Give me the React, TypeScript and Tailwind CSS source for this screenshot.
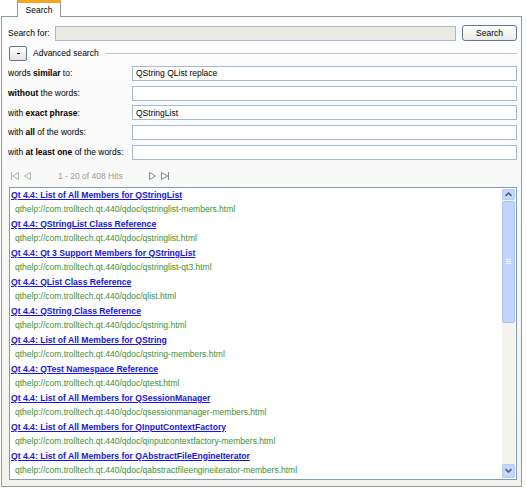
import React from 'react';

const results = [
  ['Qt 4.4: List of All Members for QStringList', 'qstringlist-members.html'],
  ['Qt 4.4: QStringList Class Reference', 'qstringlist.html'],
  ['Qt 4.4: Qt 3 Support Members for QStringList', 'qstringlist-qt3.html'],
  ['Qt 4.4: QList Class Reference', 'qlist.html'],
  ['Qt 4.4: QString Class Reference', 'qstring.html'],
  ['Qt 4.4: List of All Members for QString', 'qstring-members.html'],
  ['Qt 4.4: QTest Namespace Reference', 'qtest.html'],
  ['Qt 4.4: List of All Members for QSessionManager', 'qsessionmanager-members.html'],
  ['Qt 4.4: List of All Members for QInputContextFactory', 'qinputcontextfactory-members.html'],
  ['Qt 4.4: List of All Members for QAbstractFileEngineIterator', 'qabstractfileengineiterator-members.html'],
];

const rows: [React.ReactNode, string][] = [
  [<>words <b>similar</b> to:</>, 'QString QList replace'],
  [<><b>without</b> the words:</>, ''],
  [<>with <b>exact phrase</b>:</>, 'QStringList'],
  [<>with <b>all</b> of the words:</>, ''],
  [<>with <b>at least one</b> of the words:</>, ''],
];

function NavIcon({ dir, bar, color }: { dir: 'l' | 'r'; bar?: boolean; color: string }) {
  const tri = dir === 'l' ? 'M8.5 1.5 L2.5 5 L8.5 8.5 Z' : 'M1.5 1.5 L7.5 5 L1.5 8.5 Z';
  return (
    <svg width="10" height="10" viewBox="0 0 10 10" className="block shrink-0">
      <path d={tri} fill="none" stroke={color} strokeWidth="1" />
      {bar && (dir === 'l'
        ? <path d="M1.5 1 V9" stroke={color} strokeWidth="1" />
        : <path d="M8.5 1 V9" stroke={color} strokeWidth="1" />)}
    </svg>
  );
}

function Chevron({ up }: { up?: boolean }) {
  return (
    <svg width="7" height="5" viewBox="0 0 7 5">
      <path d={up ? 'M0.5 4 L3.5 1 L6.5 4' : 'M0.5 1 L3.5 4 L6.5 1'} fill="none" stroke="#4d6185" strokeWidth="1.6" />
    </svg>
  );
}

export default function App() {
  return (
    <div className="w-[526px] h-[488px] bg-white font-['Liberation_Sans',Arial,sans-serif] text-[8.5px] text-black leading-none">
      <div className="h-[16px] flex pl-[17px] relative z-10">
        <div className="w-[44px] h-[17px] bg-white border-x border-[#919b9c] border-t-[3px] border-t-[#f5a623] flex items-center justify-center text-[8.5px]">
          Search
        </div>
      </div>
      <div className="ml-[1px] w-[521px] h-[471px] border border-[#919b9c] bg-gradient-to-b from-[#fcfcfe] to-[#f3f2ed] pl-[6px] pr-[4px] pt-[8px] flex flex-col">
        <div className="flex items-center h-[16px]">
          <span className="w-[47px]">Search for:</span>
          <div className="flex-1 h-[15px] bg-[#ebeae3] border border-[#a5b9d3]" />
          <button className="ml-[6px] w-[55px] h-[16px] rounded-[3px] border border-[#5d7899] bg-gradient-to-b from-white to-[#ebeae2] text-[8.5px] leading-none">
            Search
          </button>
        </div>
        <div className="flex items-center h-[15px] mt-[5px] pl-[1px]">
          <div className="w-[18px] h-[15px] rounded-[2px] border border-[#5d7899] bg-gradient-to-b from-white to-[#e6e4dc] flex items-center justify-center">
            <span className="block w-[3px] h-px bg-black" />
          </div>
          <span className="ml-[6px]">Advanced search</span>
          <div className="flex-1 ml-[6px] h-px bg-[#c5c4bb]" />
        </div>
        <div className="flex flex-col gap-[4.7px] mt-[5px]">
          {rows.map(([label, value], i) => (
            <div key={i} className="flex items-center h-[15px]">
              <span className="w-[124px] whitespace-nowrap">{label}</span>
              <div className="flex-1 h-[15px] bg-white border border-[#a5b9d3] flex items-center pl-[3px]">{value}</div>
            </div>
          ))}
        </div>
        <div className="flex items-center h-[12px] mt-[10px] pl-[2px] text-[#9a9a9a]">
          <NavIcon dir="l" bar color="#b0b0b0" />
          <div className="ml-[2px]"><NavIcon dir="l" color="#b0b0b0" /></div>
          <div className="ml-[26px] w-[90px] shrink-0">1 - 20 of 408 Hits</div>
          <NavIcon dir="r" color="#8a8a8a" />
          <div className="ml-[2px]"><NavIcon dir="r" bar color="#8a8a8a" /></div>
        </div>
        <div className="mt-[5px] h-[293px] ml-[1px] border border-[#7f9db9] bg-white flex">
          <div className="flex-1 overflow-hidden pl-[1px] leading-[14.5px] whitespace-nowrap">
            {results.map(([title, file]) => (
              <div key={file}>
                <div className="font-bold text-[#1414f0] underline text-[8.6px]">{title}</div>
                <div className="pl-[4px] text-[#3c9132]">qthelp://com.trolltech.qt.440/qdoc/{file}</div>
              </div>
            ))}
          </div>
          <div className="w-[13px] my-[1px] mr-[1px] flex flex-col bg-[#f4f3ee]">
            <div className="h-[11px] rounded-[2px] border border-[#b8cbf6] bg-[#c6d5fc] flex items-center justify-center">
              <Chevron up />
            </div>
            <div className="h-[122px] mt-[1px] rounded-[2px] border border-[#aec3f2] bg-[#c3d3fd] flex items-center justify-center">
              <div className="flex flex-col gap-[1px]">
                <span className="block w-[5px] h-px bg-[#eef3ff]" />
                <span className="block w-[5px] h-px bg-[#eef3ff]" />
                <span className="block w-[5px] h-px bg-[#eef3ff]" />
              </div>
            </div>
            <div className="flex-1" />
            <div className="h-[14px] rounded-[2px] border border-[#b8cbf6] bg-[#c6d5fc] flex items-center justify-center">
              <Chevron />
            </div>
          </div>
        </div>
      </div>
    </div>
  );
}
